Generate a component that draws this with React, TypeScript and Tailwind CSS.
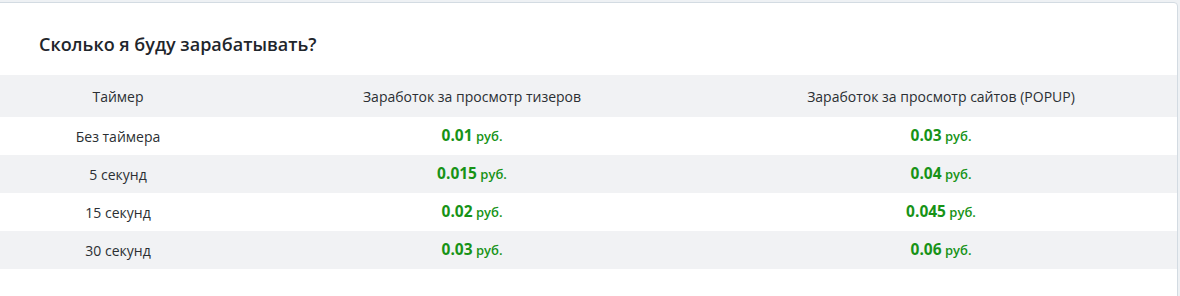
import React from 'react';

const rows = [
    { timer: 'Без таймера', teaser: '0.01', popup: '0.03' },
    { timer: '5 секунд', teaser: '0.015', popup: '0.04' },
    { timer: '15 секунд', teaser: '0.02', popup: '0.045' },
    { timer: '30 секунд', teaser: '0.03', popup: '0.06' },
];

const Price = ({ value }: { value: string }) => (
    <span className="text-[#179317]">
        <span className="text-[15.5px] font-bold">{value}</span>
        <span className="text-[13px] font-semibold"> руб.</span>
    </span>
);

export default function App() {
    return (
        <div className="w-[1180px] h-[296px] bg-[#eef1f4] pt-[2px] overflow-hidden" style={{ fontFamily: '"Open Sans", sans-serif' }}>
            <div className="-ml-[4px] w-[1182px] h-[300px] bg-white border border-[#d3dbe2] rounded-[4px] pt-[29px]">
                <h2 className="pl-[42px] text-[18px] font-semibold text-[#1f262c] leading-[24px]">Сколько я буду зарабатывать?</h2>
                <div className="mt-[19px] text-[14px] text-[#2b2f33]">
                    <div className="grid grid-cols-[242px_466px_1fr] h-[42px] items-center bg-[#f1f2f4] text-center">
                        <div>Таймер</div>
                        <div>Заработок за просмотр тизеров</div>
                        <div>Заработок за просмотр сайтов (POPUP)</div>
                    </div>
                    {rows.map((r, i) => (
                        <div key={r.timer} className={`grid grid-cols-[242px_466px_1fr] h-[38px] items-center text-center ${i % 2 ? 'bg-[#f1f2f4]' : 'bg-white'}`}>
                            <div>{r.timer}</div>
                            <div><Price value={r.teaser} /></div>
                            <div><Price value={r.popup} /></div>
                        </div>
                    ))}
                </div>
            </div>
        </div>
    );
}
